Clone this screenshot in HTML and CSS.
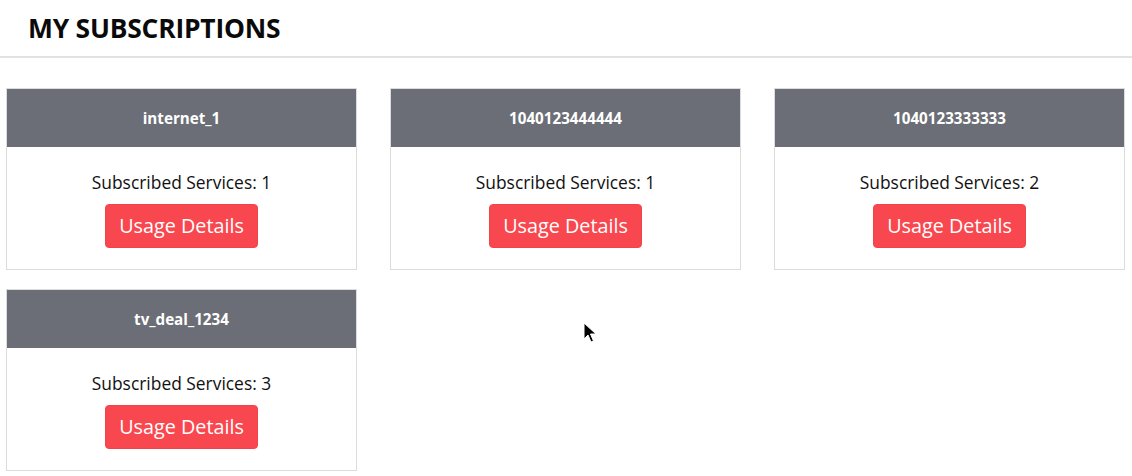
FILE: index.html
```html
<!DOCTYPE html>
<html>
<head>
<meta charset="utf-8">
<link rel="stylesheet" href="styles.css">
</head>
<body>
<header class="topbar">
  <h1 class="title">MY SUBSCRIPTIONS</h1>
</header>
<main class="grid">
  <section class="card">
    <div class="card-head">internet_1</div>
    <div class="card-body">
      <p class="count">Subscribed Services: 1</p>
      <button class="btn">Usage Details</button>
    </div>
  </section>
  <section class="card">
    <div class="card-head">1040123444444</div>
    <div class="card-body">
      <p class="count">Subscribed Services: 1</p>
      <button class="btn">Usage Details</button>
    </div>
  </section>
  <section class="card">
    <div class="card-head">1040123333333</div>
    <div class="card-body">
      <p class="count">Subscribed Services: 2</p>
      <button class="btn">Usage Details</button>
    </div>
  </section>
  <section class="card">
    <div class="card-head">tv_deal_1234</div>
    <div class="card-body">
      <p class="count">Subscribed Services: 3</p>
      <button class="btn">Usage Details</button>
    </div>
  </section>
</main>
<svg class="cursor" width="14" height="22" viewBox="0 0 14 22">
  <path d="M1 1 L1 17 L5 13 L8 20 L10.5 19 L7.5 12 L13 12 Z" fill="#000" stroke="#fff" stroke-width="1"/>
</svg>
</body>
</html>
```
FILE: styles.css
```css
html, body {
  margin: 0;
  padding: 0;
  background: #fff;
  font-family: "Open Sans", "Liberation Sans", sans-serif;
  color: #111;
}
body {
  position: relative;
  width: 1132px;
  height: 476px;
  overflow: hidden;
}
.topbar {
  height: 58px;
  border-bottom: 2px solid #e2e2e2;
  display: flex;
  align-items: center;
  padding-left: 28px;
  box-sizing: border-box;
}
.title {
  margin: 0;
  font-size: 26.4px;
  font-weight: 700;
  color: #0a0a0a;
  letter-spacing: -0.2px;
  line-height: 1;
}
.grid {
  display: grid;
  grid-template-columns: repeat(3, 351px);
  column-gap: 33px;
  row-gap: 19px;
  padding: 30px 0 0 6px;
}
.card {
  border: 1px solid #dcdcdc;
  background: #fff;
}
.card-head {
  height: 58px;
  background: #6b6e76;
  color: #fff;
  font-weight: 700;
  font-size: 15.2px;
  display: flex;
  align-items: center;
  justify-content: center;
}
.card-body {
  display: flex;
  flex-direction: column;
  align-items: center;
  padding: 22px 0 21px;
}
.count {
  margin: 0 0 9px;
  font-size: 17.4px;
  line-height: 26px;
  color: #111;
}
.btn {
  font-family: "Open Sans", "Liberation Sans", sans-serif;
  font-size: 19.8px;
  line-height: 30px;
  padding: 6px 13.5px;
  color: #fff;
  background: #f9474f;
  border: 1px solid #f0434b;
  border-radius: 4px;
}
.cursor {
  position: absolute;
  left: 583px;
  top: 322px;
}
```
